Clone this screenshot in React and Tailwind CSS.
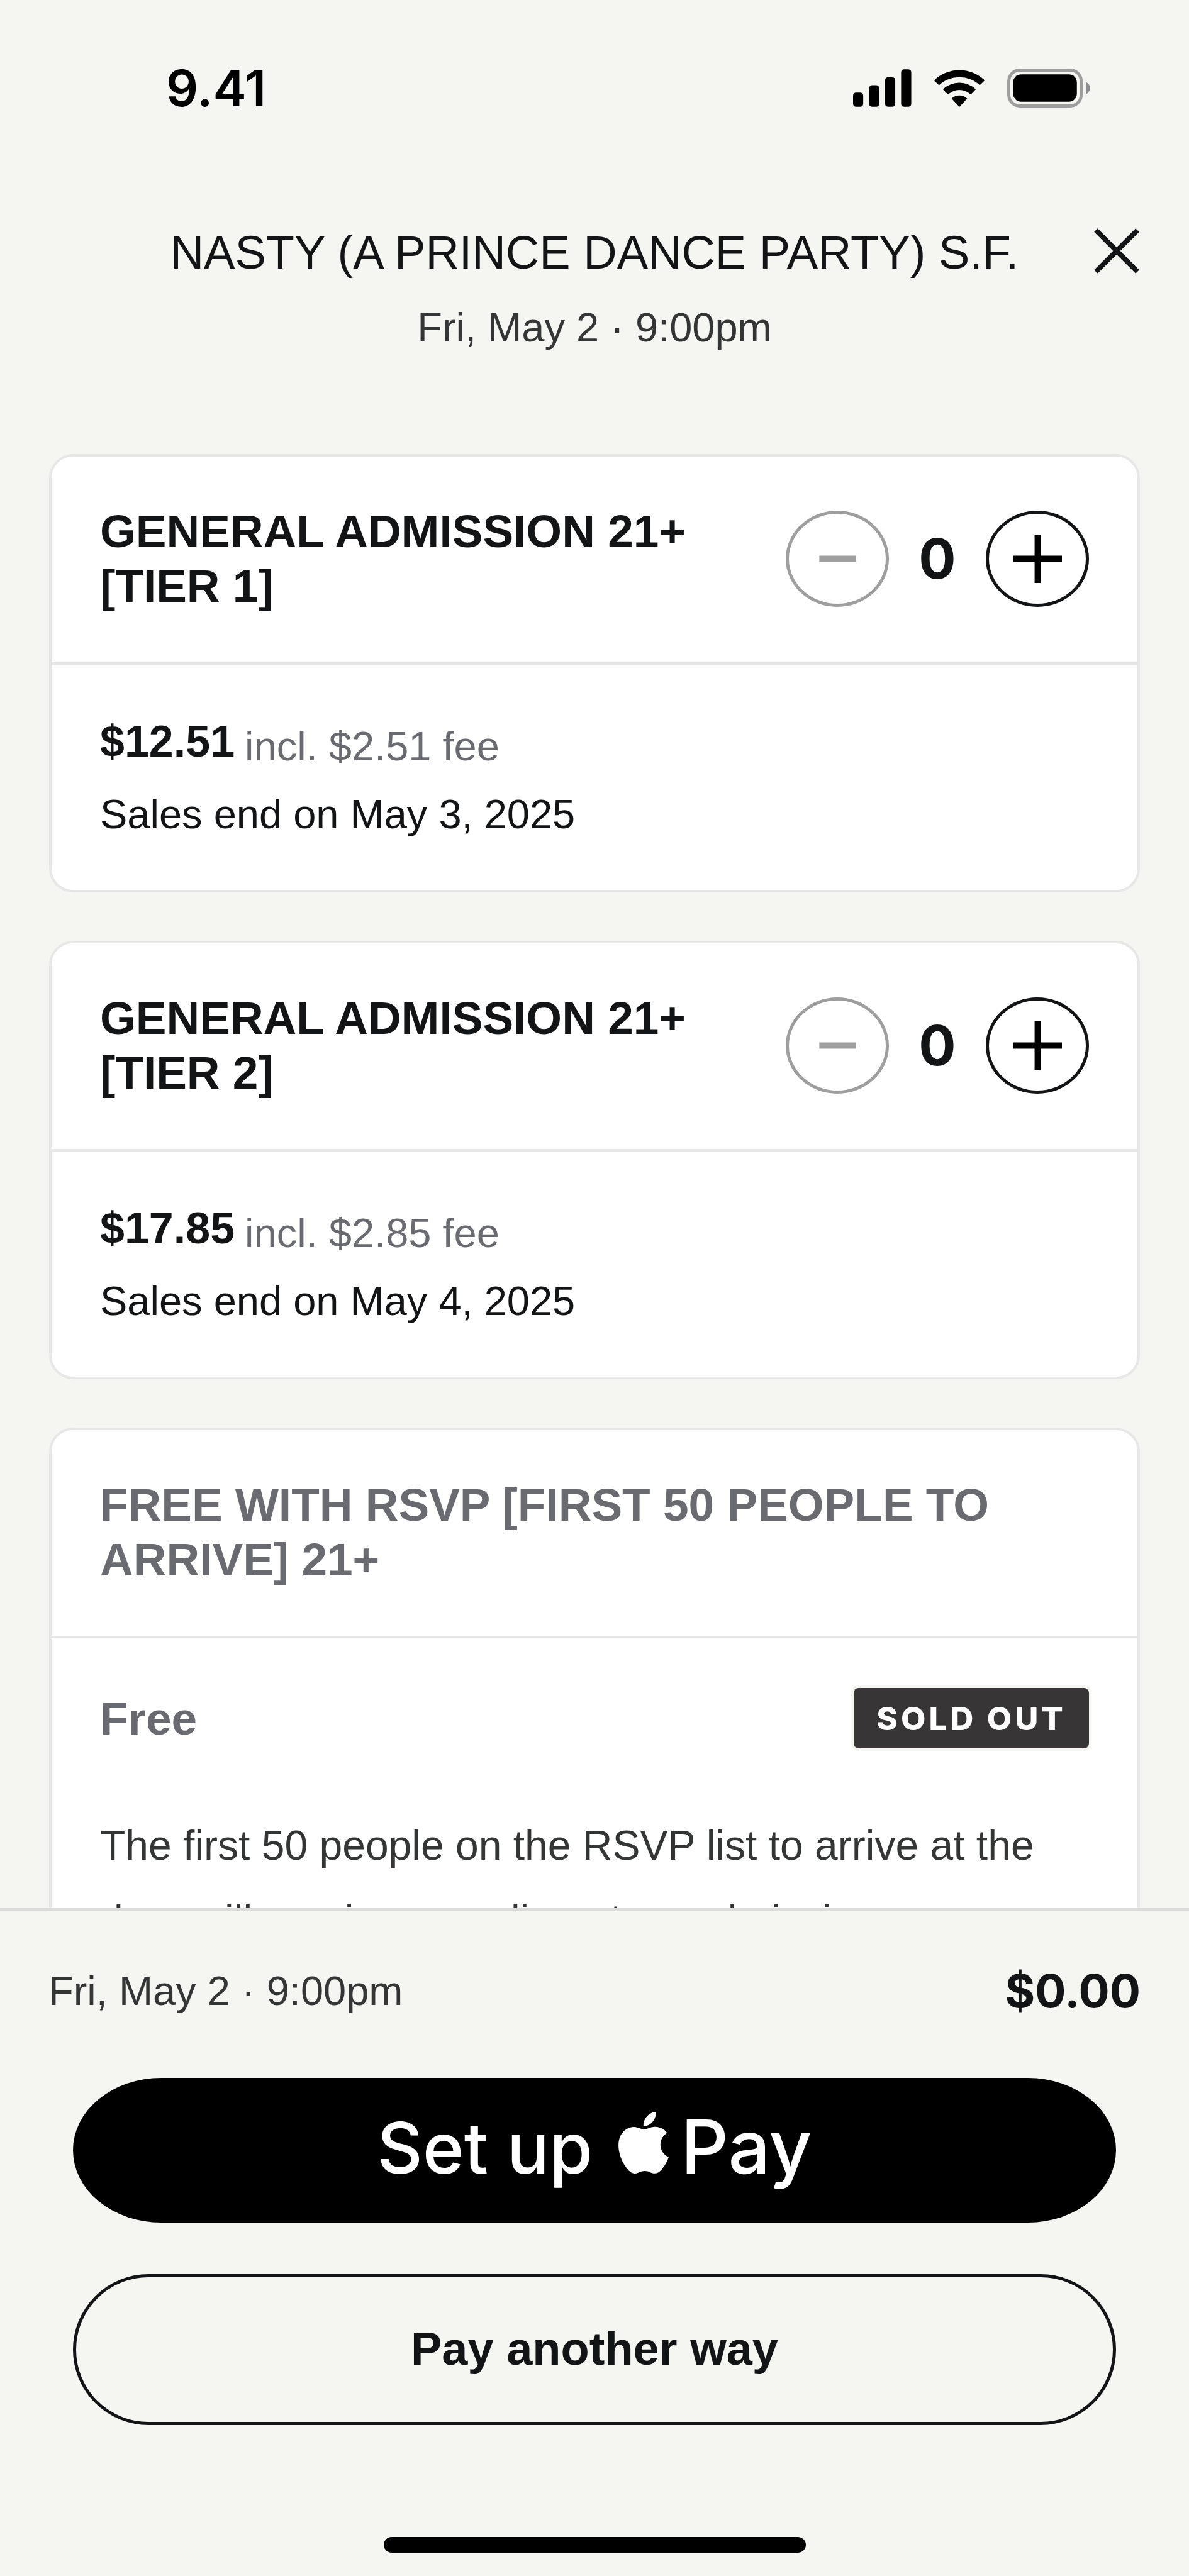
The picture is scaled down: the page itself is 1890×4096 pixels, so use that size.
import { useState } from 'react';
import { SiApple } from 'react-icons/si';

const tickets = [
  {
    id: 'tier-1',
    name: 'GENERAL ADMISSION 21+ [TIER 1]',
    price: 12.51,
    fee: 2.51,
    salesEnd: 'Sales end on May 3, 2025',
  },
  {
    id: 'tier-2',
    name: 'GENERAL ADMISSION 21+ [TIER 2]',
    price: 17.85,
    fee: 2.85,
    salesEnd: 'Sales end on May 4, 2025',
  },
  {
    id: 'rsvp',
    name: 'FREE WITH RSVP [FIRST 50 PEOPLE TO ARRIVE] 21+',
    price: 0,
    soldOut: true,
    description:
      'The first 50 people on the RSVP list to arrive at the door will receive complimentary admission.',
  },
];

function SignalIcon() {
  return (
    <svg viewBox="0 0 95 61" className="w-[93px] h-[60px]" aria-hidden="true">
      <rect x="0" y="38" width="16.5" height="23" rx="5" />
      <rect x="26" y="26" width="16.5" height="35" rx="5" />
      <rect x="52" y="13" width="16.5" height="48" rx="5" />
      <rect x="78" y="0" width="16.5" height="61" rx="5" />
    </svg>
  );
}

function WifiIcon() {
  return (
    <svg viewBox="0 0 83 61" className="w-[82px] h-[60px]" aria-hidden="true">
      <path d="M0.5 18 A59 59 0 0 1 82.5 18 L74.5 26 A48 48 0 0 0 8.5 26 Z" />
      <path d="M15 32.5 A38.5 38.5 0 0 1 68 32.5 L60 41 A27 27 0 0 0 23 41 Z" />
      <path d="M29 47.5 A18 18 0 0 1 54 47.5 L41.5 61 Z" />
    </svg>
  );
}

function BatteryIcon() {
  return (
    <svg viewBox="0 0 134 63" className="w-[132px] h-[62px]" aria-hidden="true">
      <rect x="2.5" y="2.5" width="117" height="58" rx="18" fill="none" stroke="#9d9d9d" strokeWidth="5" />
      <rect x="9.5" y="9.5" width="103" height="44" rx="13" />
      <path d="M127 21.5 C136 26 136 37 127 41.5 Z" fill="#8b8b8d" />
    </svg>
  );
}

function StatusBar() {
  return (
    <div className="h-[280px] shrink-0 flex items-center justify-between pl-[264px] pr-[157px] text-black">
      <span className="font-['Inter',sans-serif] text-[80px] font-semibold leading-none">9.41</span>
      <div className="flex items-center gap-[35px]">
        <SignalIcon />
        <WifiIcon />
        <BatteryIcon />
      </div>
    </div>
  );
}

function Header() {
  return (
    <header className="shrink-0 pt-[77px] pb-[161px] px-[79px]">
      <div className="grid grid-cols-[1fr_auto_1fr] items-center">
        <h1 className="col-start-2 text-[74px] leading-[90px]">NASTY (A PRINCE DANCE PARTY) S.F.</h1>
        <button type="button" aria-label="Close" className="justify-self-end pb-1.5">
          <svg viewBox="0 0 72 72" className="size-[72px]" fill="none" stroke="currentColor" strokeWidth="8">
            <path d="M3 3 L69 69 M69 3 L3 69" />
          </svg>
        </button>
      </div>
      <p className="mt-[34px] text-center text-[65px] leading-[80px] text-[#343535]">Fri, May 2 · 9:00pm</p>
    </header>
  );
}

function Stepper({ name, value, onChange }) {
  return (
    <div className="shrink-0 flex items-center">
      <button
        type="button"
        aria-label={`Remove one ${name}`}
        disabled={value === 0}
        onClick={() => onChange(value - 1)}
        className="w-[164px] h-[153px] rounded-[50%] border-5 border-[#131416] text-black disabled:border-[#9e9e9e] disabled:text-[#9e9e9e] flex items-center justify-center"
      >
        <svg viewBox="0 0 78 78" className="size-[77px]" fill="currentColor">
          <path d="M9.5 34 H68.5 V44 H9.5 Z" />
        </svg>
      </button>
      <span className="w-[154px] text-center font-['Inter',sans-serif] text-[88px] font-bold leading-none">{value}</span>
      <button
        type="button"
        aria-label={`Add one ${name}`}
        onClick={() => onChange(value + 1)}
        className="w-[164px] h-[153px] rounded-[50%] border-5 border-[#131416] text-black flex items-center justify-center"
      >
        <svg viewBox="0 0 78 78" className="size-[77px]" fill="currentColor">
          <path d="M0 34 H34 V0 H44 V34 H78 V44 H44 V78 H34 V44 H0 Z" />
        </svg>
      </button>
    </div>
  );
}

function TicketCard({ ticket, quantity, onQuantityChange }) {
  const { name, price, fee, salesEnd, soldOut, description } = ticket;

  return (
    <article className="bg-white border-4 border-[#e7e7e7] rounded-[38px]">
      <div className="flex items-center justify-between gap-[77px] px-[77px] pt-[75px] pb-[78px]">
        <h2 className={`text-[73px] leading-[87px] font-bold ${soldOut ? 'text-[#696b70]' : ''}`}>{name}</h2>
        {!soldOut && <Stepper name={name} value={quantity} onChange={onQuantityChange} />}
      </div>

      <div className="border-t-4 border-[#e7e7e7] px-[77px] pt-[79px] pb-[76px]">
        {soldOut ? (
          <div className="flex items-center justify-between">
            <span className="text-[73px] leading-[87px] font-bold text-[#696b70]">Free</span>
            <span className="h-[96px] px-[36px] flex items-center rounded-lg ring-4 ring-[#f5f6f1] bg-[#383536] font-['Inter',sans-serif] text-[51px] font-extrabold tracking-widest leading-none text-white">
              SOLD OUT
            </span>
          </div>
        ) : (
          <div className="flex items-end gap-4">
            <span className="text-[70px] leading-[87px] font-bold">${price.toFixed(2)}</span>
            <span className="text-[65px] leading-[72px] text-[#696b70]">incl. ${fee.toFixed(2)} fee</span>
          </div>
        )}
        {salesEnd && <p className="mt-[28px] text-[65px] leading-[88px]">{salesEnd}</p>}
        {description && <p className="mt-[95px] text-[66px] leading-[118px] text-[#343535]">{description}</p>}
      </div>
    </article>
  );
}

function CheckoutBar({ total }) {
  return (
    <footer className="shrink-0 border-t-4 border-[#dcdcda] pt-[84px] pb-[37px] px-[77px]">
      <div className="flex items-start justify-between">
        <span className="text-[65px] leading-[88px] text-[#343535]">Fri, May 2 · 9:00pm</span>
        <span className="font-['Inter',sans-serif] text-[73px] leading-[88px] font-bold">${total.toFixed(2)}</span>
      </div>

      <div className="px-[39px]">
        <button
          type="button"
          className="mt-[94px] h-[230px] w-full pb-3 rounded-[140px/115px] bg-black text-white flex items-center justify-center font-['Inter',sans-serif] font-medium"
        >
          <span className="flex items-baseline leading-none">
            <span className="text-[112px]">Set up</span>
            <SiApple className="ml-[32px] size-[98px]" aria-label="Apple" />
            <span className="ml-[10px] text-[118px]">Pay</span>
          </span>
        </button>
        <button
          type="button"
          className="mt-[82px] h-[240px] w-full pb-1 rounded-full border-5 border-[#131416] text-[74px] font-bold"
        >
          Pay another way
        </button>
      </div>

      {/* Home indicator */}
      <div className="mt-[178px] mx-auto w-[671px] h-[25px] rounded-full bg-black" />
    </footer>
  );
}

export default function App() {
  const [quantities, setQuantities] = useState({});

  const total = tickets.reduce((sum, t) => sum + t.price * (quantities[t.id] || 0), 0);

  return (
    <div className="h-screen flex flex-col bg-[#f5f6f1] text-[#131416] font-['Liberation_Sans',Arial,sans-serif]">
      <StatusBar />
      <Header />
      <main className="flex-1 min-h-0 overflow-hidden px-[78px] flex flex-col gap-[77px]">
        {tickets.map((ticket) => (
          <TicketCard
            key={ticket.id}
            ticket={ticket}
            quantity={quantities[ticket.id] || 0}
            onQuantityChange={(value) => setQuantities({ ...quantities, [ticket.id]: value })}
          />
        ))}
      </main>
      <CheckoutBar total={total} />
    </div>
  );
}
